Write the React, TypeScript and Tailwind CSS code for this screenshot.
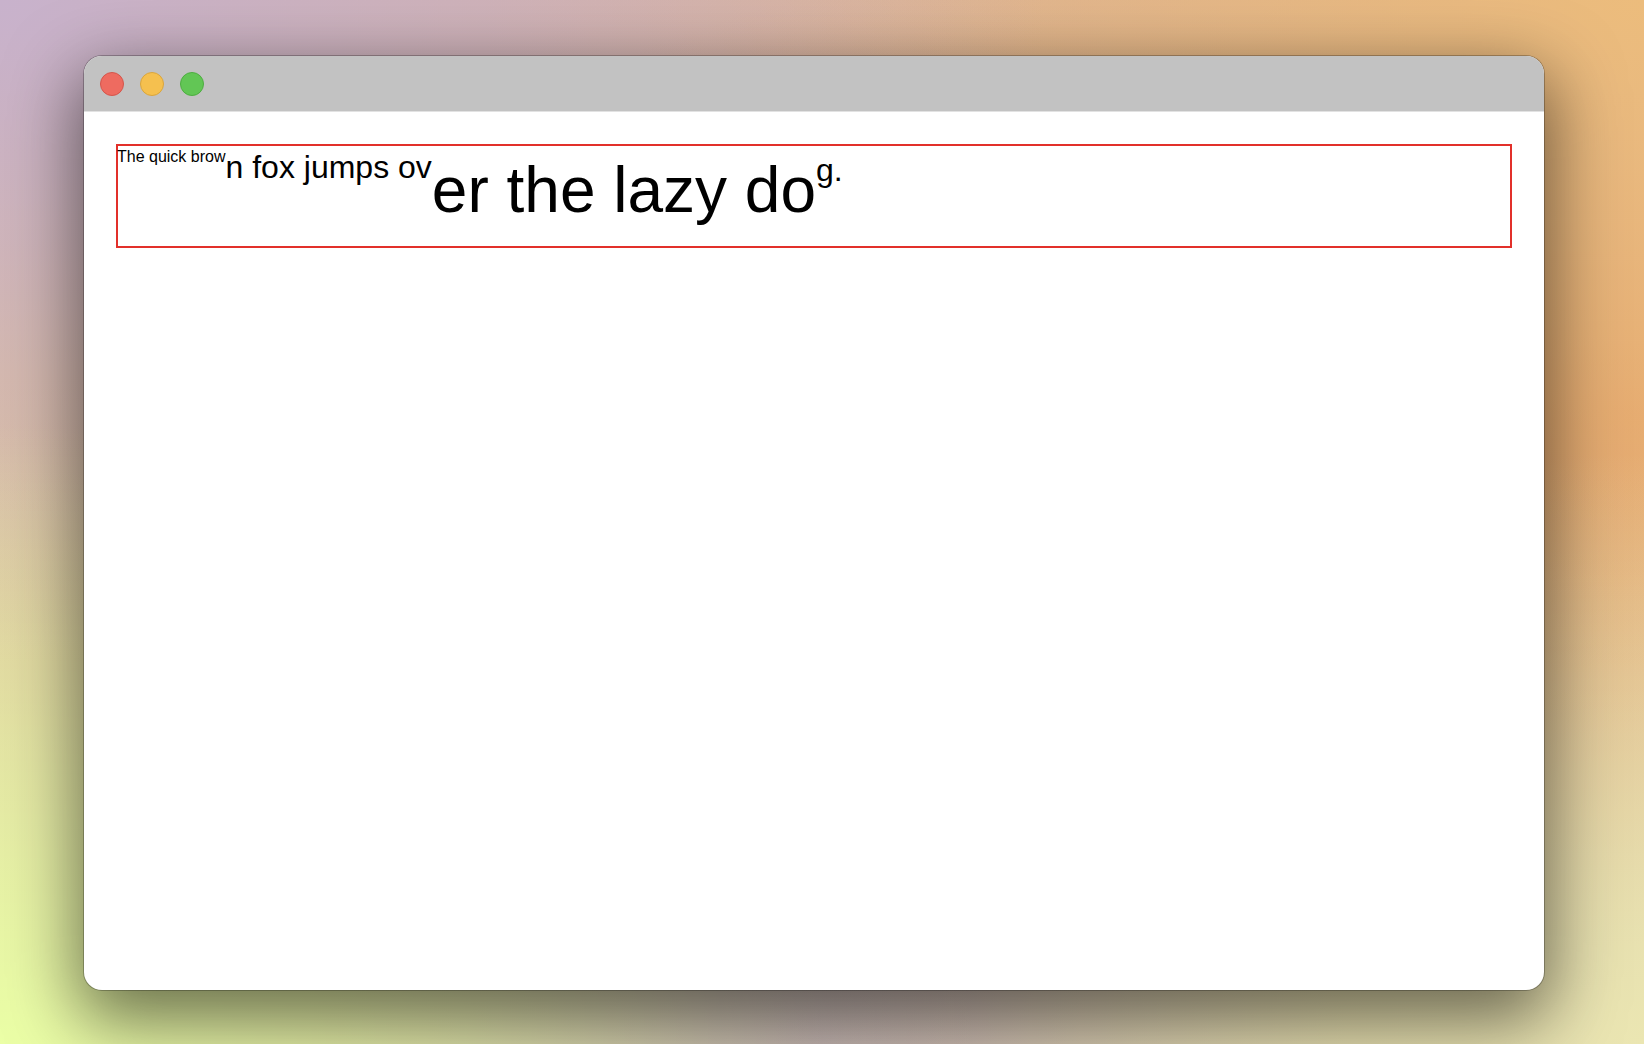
import React from "react";

export default function App() {
  return (
    <div
      className="w-[1644px] h-[1044px] overflow-hidden pl-[84px] pt-[56px] bg-[radial-gradient(ellipse_at_0%_100%,#ebffa6_0%,rgba(235,255,166,0.6)_18%,rgba(235,255,166,0)_42%),radial-gradient(ellipse_at_100%_100%,#ebe6b2_0%,rgba(235,230,178,0)_40%),radial-gradient(ellipse_at_50%_100%,#b8a0b4_0%,rgba(184,160,180,0)_45%),radial-gradient(ellipse_at_0%_0%,#c8b2cc_0%,rgba(200,178,204,0)_45%),radial-gradient(ellipse_at_100%_0%,#ecbc7c_0%,rgba(236,188,124,0)_50%),radial-gradient(ellipse_at_100%_40%,#e2a068_0%,rgba(226,160,104,0)_60%),linear-gradient(180deg,#d6b2a4_0%,#ddbd9a_35%,#dcc4a0_65%,#d8cca8_100%)]"
      style={{ fontFamily: '"Liberation Sans", Arial, sans-serif' }}
    >
      <div className="w-[1460px] h-[934px] rounded-[18px] overflow-hidden bg-white flex flex-col ring-1 ring-black/25 shadow-[0_24px_70px_6px_rgba(0,0,0,0.55)]">
        <div className="h-[56px] shrink-0 bg-[#c2c2c2] border-b border-[#e2e2e2] flex items-center gap-[16px] pl-[16px]">
          <div className="w-[24px] h-[24px] rounded-full bg-[#ee6b60] border border-[#d4554b]" />
          <div className="w-[24px] h-[24px] rounded-full bg-[#f5c04f] border border-[#d9a53d]" />
          <div className="w-[24px] h-[24px] rounded-full bg-[#62c655] border border-[#4ead41]" />
        </div>
        <div className="flex-1 p-[32px]">
          <div className="h-[104px] border-2 border-[#e2302a] flex items-start text-black whitespace-pre">
            <span className="text-[16px] leading-[21.5px] -ml-[1px]">The quick brow</span>
            <span className="text-[32px] leading-[42.4px]">n fox jumps ov</span>
            <span className="text-[64px] leading-[88.2px]">er the lazy do</span>
            <span className="text-[32px] leading-[49.2px]">g.</span>
          </div>
        </div>
      </div>
    </div>
  );
}
